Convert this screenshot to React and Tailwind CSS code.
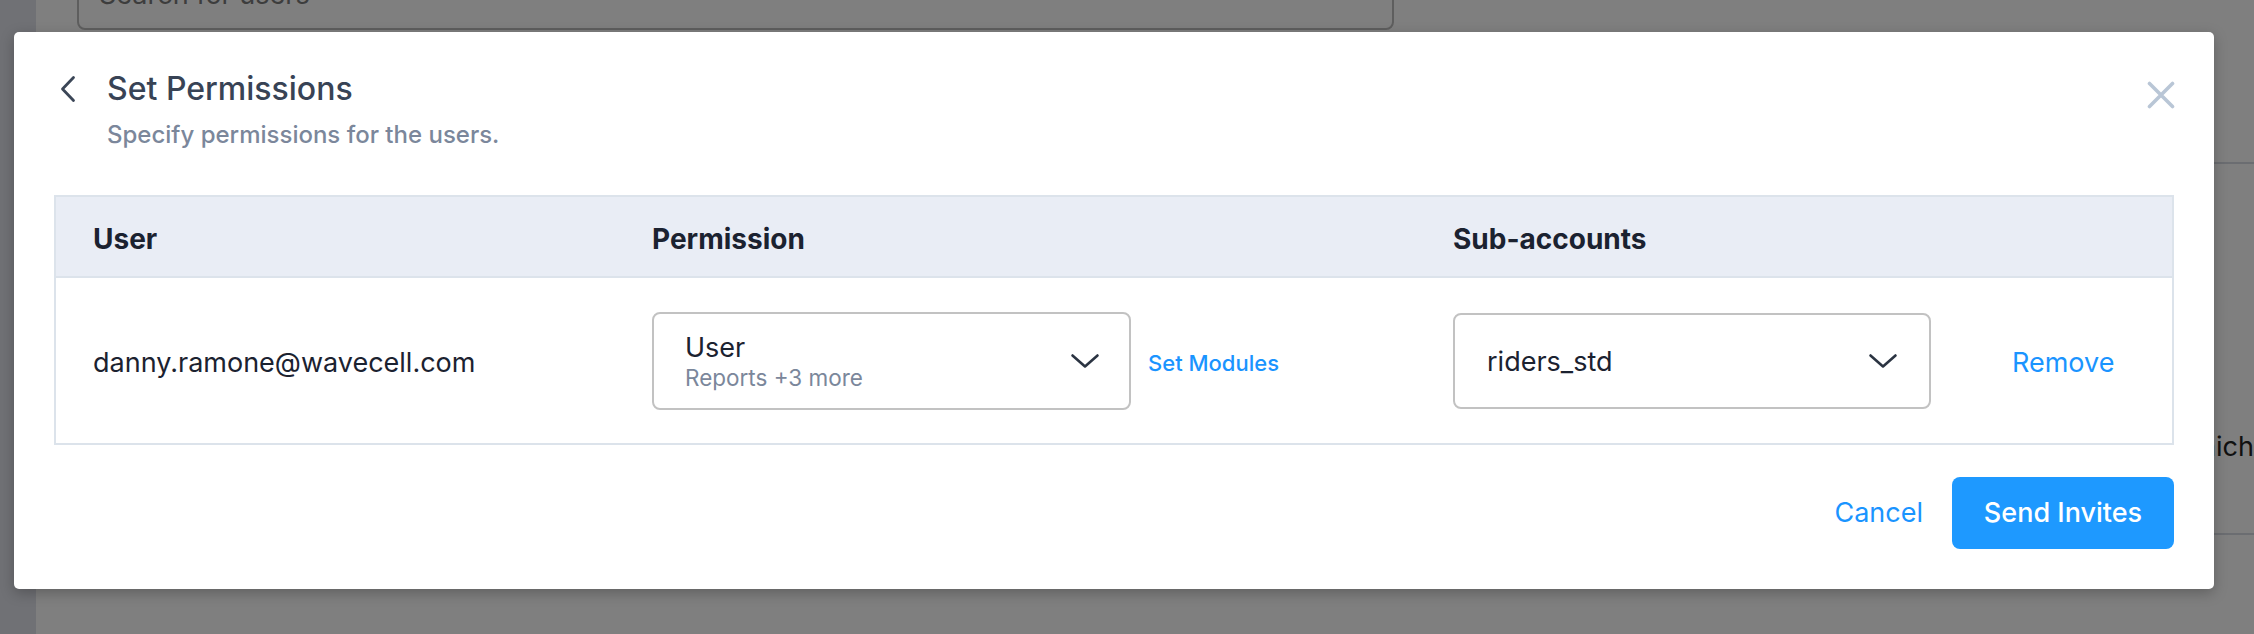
export default function App() {
  const Chevron = () => (
    <svg width="30" height="16" viewBox="0 0 30 16" fill="none">
      <path d="M2.5 2.5 L15 13.5 L27.5 2.5" stroke="#2b3442" strokeWidth="2.6" strokeLinecap="round" strokeLinejoin="round" />
    </svg>
  );
  return (
    <div className="relative w-[2254px] h-[634px] overflow-hidden bg-white font-['Inter',sans-serif] flex">
      <aside className="w-[36px] shrink-0 bg-[#e0e2ea]" />
      <main className="flex-1 flex flex-col">
        <div className="mt-[-40px] ml-[41px] w-[1317px] h-[70px] shrink-0 border-2 border-[#bdbdbd] rounded-[8px] flex items-center pl-[20px] text-[27px] text-[#7a7a7a]">
          Search for users
        </div>
        <div className="mt-[132px] shrink-0 border-y-2 border-[#d6dbe3] h-[373px] pt-[265px] text-right text-[27px] leading-[36px] text-[#222]">
          Select the sub-accounts which
        </div>
      </main>

      <div className="absolute inset-0 bg-black/50" />

      <div className="absolute left-[14px] top-[32px] w-[2200px] h-[557px] bg-white rounded-[5px] shadow-[0_4px_14px_rgba(0,0,0,0.25)] px-[40px] pt-[37px] flex flex-col">
        <div className="flex items-start justify-between">
          <div>
            <div className="flex items-center h-[40px]">
              <div className="w-[53px] flex">
                <svg width="16" height="28" viewBox="0 0 16 28" fill="none" className="ml-[6px]">
                  <path d="M13.5 2.5 L2.5 14 L13.5 25.5" stroke="#3b4657" strokeWidth="2.8" strokeLinecap="round" strokeLinejoin="round" />
                </svg>
              </div>
              <h2 className="text-[32px] leading-[40px] font-medium text-[#384355]">Set Permissions</h2>
            </div>
            <p className="mt-[12px] pl-[53px] text-[24px] leading-[28px] font-medium text-[#7b879b]">
              Specify permissions for the users.
            </p>
          </div>
          <button className="mt-[12px] mr-[-1px]">
            <svg width="28" height="28" viewBox="0 0 28 28" fill="none">
              <path d="M2.5 2.5 L25.5 25.5 M25.5 2.5 L2.5 25.5" stroke="#b9c6d6" strokeWidth="3.6" strokeLinecap="round" />
            </svg>
          </button>
        </div>

        <div className="mt-[46px] border-2 border-[#dce3eb]">
          <div className="grid grid-cols-[596px_801px_1fr] h-[81px] pt-[5px] bg-[#e9edf5] border-b-2 border-[#dce3eb] items-center text-[28px] font-bold text-[#1b2230]">
            <div className="pl-[37px]">User</div>
            <div>Permission</div>
            <div>Sub-accounts</div>
          </div>
          <div className="grid grid-cols-[596px_801px_1fr] h-[165px] items-center text-[27px] text-[#1b2230]">
            <div className="pl-[37px] pt-[5px]">danny.ramone@wavecell.com</div>
            <div className="flex items-center">
              <div className="w-[479px] h-[98px] border-2 border-[#c2c2c2] rounded-[8px] flex items-center justify-between pl-[31px] pr-[29px]">
                <div className="flex flex-col pt-[5px]">
                  <span className="text-[27px] leading-[30px]">User</span>
                  <span className="text-[22.5px] leading-[30px] text-[#7b879b]">Reports +3 more</span>
                </div>
                <Chevron />
              </div>
              <span className="ml-[17px] pt-[5px] text-[22px] font-medium text-[#1a94ff]">Set Modules</span>
            </div>
            <div className="flex items-center">
              <div className="w-[478px] h-[96px] border-2 border-[#c2c2c2] rounded-[8px] flex items-center justify-between pl-[32px] pr-[31px]">
                <span className="pt-[4px] text-[27px]">riders_std</span>
                <Chevron />
              </div>
              <span className="ml-[81px] pt-[5px] text-[27px] text-[#1a94ff]">Remove</span>
            </div>
          </div>
        </div>

        <div className="mt-[32px] flex justify-end items-center gap-[29px]">
          <button className="text-[27px] text-[#1a94ff]">Cancel</button>
          <button className="w-[222px] h-[72px] rounded-[8px] bg-[#1e99ff] text-white text-[27px] font-medium">
            Send Invites
          </button>
        </div>
      </div>
    </div>
  );
}
